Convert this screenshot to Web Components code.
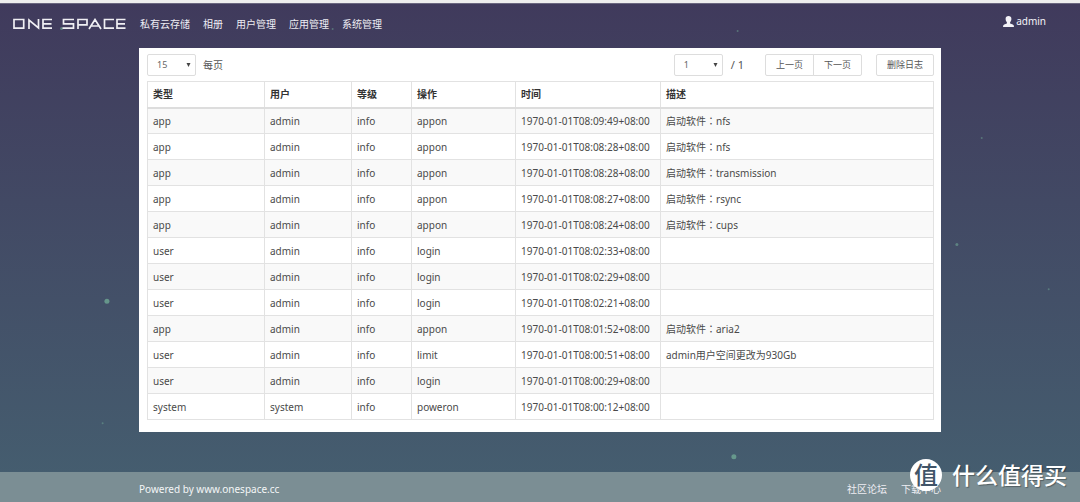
<!DOCTYPE html>
<html lang="zh-CN">
<head>
<meta charset="utf-8">
<title>ONE SPACE</title>
<style>
html{height:100%}
body{margin:0;min-height:100%;display:grid;font:10px/16px "Noto Sans","Noto Sans CJK SC",sans-serif;color:#333;background:#433f5f}
</style>
</head>
<body>
<one-app></one-app>
<script>
const define = (name, html, setup) => customElements.define(name, class extends HTMLElement {
  constructor() {
    super();
    const t = document.createElement('template');
    t.innerHTML = html;
    this.attachShadow({mode: 'open'}).append(t.content.cloneNode(true));
  }
  connectedCallback() { if (setup) setup(this.shadowRoot, this); }
});

define('star-field', `
<style>
:host{position:absolute;inset:0;pointer-events:none;overflow:hidden}
svg{width:100%;height:100%;display:block}
</style>
<svg aria-hidden="true" fill="#6fa794"></svg>`, root => {
  const stars = [[9.9,60,2.5,.8],[88.6,48.7,1.5,.6],[67.95,91,2.5,.8],[9.5,84.3,1,.5],[90.9,27.5,1,.5],[97.1,57.6,1,.5],[68.3,6.2,1,.5],[5.7,5.7,1.5,.6],[30.8,5.8,1,.5]];
  root.querySelector('svg').innerHTML = stars.map(([x,y,r,o]) => `<circle cx="${x}%" cy="${y}%" r="${r}" opacity="${o}"/>`).join('');
});

define('brand-logo', `
<style>
:host{display:block}
a{display:block;color:#f0eff4}
svg{display:block;width:113px;height:12px}
</style>
<a href="#" aria-label="ONE SPACE"><svg viewBox="0 0 113 12" fill="none" stroke="currentColor" stroke-width="1.7">
<path d="M1 1.500H10.700V10.200H1ZM16 11V2L25.500 10V1M39 1.500H30V10.200H39M30 5.800H38.500M61 1.500H50.500V5.800H60.500V10.200H49.500M65 11V1.500H74V6.800H65M76 11L82 1.500L88 11M78.500 8H85.500M101 1.500H91.500V10.200H101M112.500 1.500H104V10.200H112.500M104 5.800H112"/></svg></a>`);

define('user-badge', `
<style>
:host{display:block}
a{display:flex;align-items:center;gap:2px;color:#f4f3f8;text-decoration:none}
svg{width:11px;height:11px}
</style>
<a href="#"><svg viewBox="0 0 11 11" fill="currentColor" aria-hidden="true"><path d="M5.500 0C3.700 0 2.600 1 2.600 2.800C2.600 4.300 3.100 5.400 3.900 6.200V7.500L1.200 8.600Q0 9.100 0 11H11Q11 9.100 9.800 8.600L7.100 7.500V6.200C7.900 5.400 8.400 4.300 8.400 2.800C8.400 1 7.300 0 5.500 0Z"/></svg><slot></slot></a>`);

define('nav-link', `
<style>
:host{display:block}
a{color:#eeedf3;text-decoration:none;white-space:nowrap}
</style>
<a href="#"><slot></slot></a>`);

define('top-bar', `
<style>
:host{display:flex;align-items:center;box-sizing:border-box;height:44px;padding:0 34px 4px 13px;gap:14px;position:relative}
nav{display:flex;gap:13px;flex:1}
user-badge{padding-bottom:6px}
</style>
<brand-logo></brand-logo><nav><slot></slot></nav><user-badge>admin</user-badge>`);

define('drop-down', `
<style>
:host{display:block;position:relative;width:49px}
select{appearance:none;box-sizing:border-box;width:100%;height:22px;border:1px solid #ddd;border-radius:2px;background:#fff;color:#666;font:inherit;font-size:9px;padding:0 9px;display:block}
svg{position:absolute;right:5px;top:9px;width:5px;height:4px;pointer-events:none}
</style>
<select><option></option></select><svg viewBox="0 0 5 4" aria-hidden="true"><path d="M.5 0H4.500L2.500 4Z" fill="#444"/></svg>`, (root, host) => {
  root.querySelector('option').textContent = host.getAttribute('value');
  root.querySelector('select').setAttribute('aria-label', host.getAttribute('label'));
});

define('push-button', `
<style>
:host{display:block}
button{box-sizing:border-box;height:22px;padding:0 10px;border:1px solid #ddd;border-radius:var(--radius,2px);background:#fff;color:#555;font:inherit;font-size:9px;line-height:20px;display:block;white-space:nowrap}
</style>
<button type="button"><slot></slot></button>`);

define('log-toolbar', `
<style>
:host{display:flex;align-items:center;height:22px;margin-bottom:5px;color:#555}
.per{margin-left:7px}
.total{margin:0 21px 0 8px;font-size:11px}
.pages{margin-left:auto}
.prev{--radius:2px 0 0 2px}
.next{--radius:0 2px 2px 0;margin-left:-1px}
.clear{margin-left:14px}
</style>
<drop-down value="15" label="每页"></drop-down><span class="per">每页</span>
<drop-down class="pages" value="1" label="页码"></drop-down><span class="total">/ 1</span>
<push-button class="prev">上一页</push-button><push-button class="next">下一页</push-button>
<push-button class="clear">删除日志</push-button>`);

define('log-table', `
<style>
:host{display:block}
table{width:100%;border-collapse:collapse;table-layout:fixed}
th,td{box-sizing:border-box;height:26px;padding:0 5px;border:1px solid #e2e2e2;text-align:left;white-space:nowrap;color:#4a4a4a}
th{color:#333;font-weight:700;border-bottom:2px solid #ddd}
tbody tr:nth-child(odd){background:#f9f9f9}
.type{width:117px}.user{width:87px}.level{width:60px}.action{width:104px}.time{width:145px}
.colon{font-family:"Noto Sans CJK TC",sans-serif;line-height:1}
</style>
<table><thead><tr><th class="type">类型</th><th class="user">用户</th><th class="level">等级</th><th class="action">操作</th><th class="time">时间</th><th>描述</th></tr></thead><tbody></tbody></table>`, root => {
  const started = app => `启动软件<span class="colon" lang="zh-TW">：</span>${app}`;
  const rows = [
    ['app','admin','appon','08:09:49',started('nfs')],
    ['app','admin','appon','08:08:28',started('nfs')],
    ['app','admin','appon','08:08:28',started('transmission')],
    ['app','admin','appon','08:08:27',started('rsync')],
    ['app','admin','appon','08:08:24',started('cups')],
    ['user','admin','login','08:02:33',''],
    ['user','admin','login','08:02:29',''],
    ['user','admin','login','08:02:21',''],
    ['app','admin','appon','08:01:52',started('aria2')],
    ['user','admin','limit','08:00:51','admin用户空间更改为930Gb'],
    ['user','admin','login','08:00:29',''],
    ['system','system','poweron','08:00:12','']];
  root.querySelector('tbody').innerHTML = rows.map(([type,user,action,time,text]) =>
    `<tr><td>${type}</td><td>${user}</td><td>info</td><td>${action}</td><td>1970-01-01T${time}+08:00</td><td>${text}</td></tr>`).join('');
});

define('site-footer', `
<style>
:host{display:block;background:#7b8e94;padding:9px 0 5px;color:#f4f6f7}
div{display:flex;gap:14px;width:74.26%;margin:0 auto}
span{flex:1}
</style>
<div><span>Powered by www.onespace.cc</span><nav-link>社区论坛</nav-link><nav-link>下载中心</nav-link></div>`);

define('smzdm-mark', `
<style>
:host{position:absolute;right:13px;bottom:11px;display:flex;align-items:center;gap:10px;color:#fff;font-size:23px;font-weight:500;line-height:32px;text-shadow:1px 1px 1px #0005;white-space:nowrap}
.seal{width:32px;height:32px;border-radius:50%;background:#fff;color:#405468;text-align:center;font-size:24px;text-shadow:none}
</style>
<span class="seal">值</span><span>什么值得买</span>`);

define('one-app', `
<style>
:host{display:flex;flex-direction:column;position:relative;background:linear-gradient(#403a5c,#455f70);min-width:0}
.edge{height:3px;background:#eee;border-bottom:1px solid #6b6780}
main{position:relative;box-sizing:border-box;width:74.26%;margin:0 auto auto;background:#fff;padding:6px 7px 12px 8px}
site-footer{position:relative;margin-top:30px}
</style>
<star-field></star-field>
<div class="edge"></div>
<top-bar><nav-link>私有云存储</nav-link><nav-link>相册</nav-link><nav-link>用户管理</nav-link><nav-link>应用管理</nav-link><nav-link>系统管理</nav-link></top-bar>
<main><log-toolbar></log-toolbar><log-table></log-table></main>
<site-footer></site-footer>
<smzdm-mark></smzdm-mark>`);
</script>
</body>
</html>
